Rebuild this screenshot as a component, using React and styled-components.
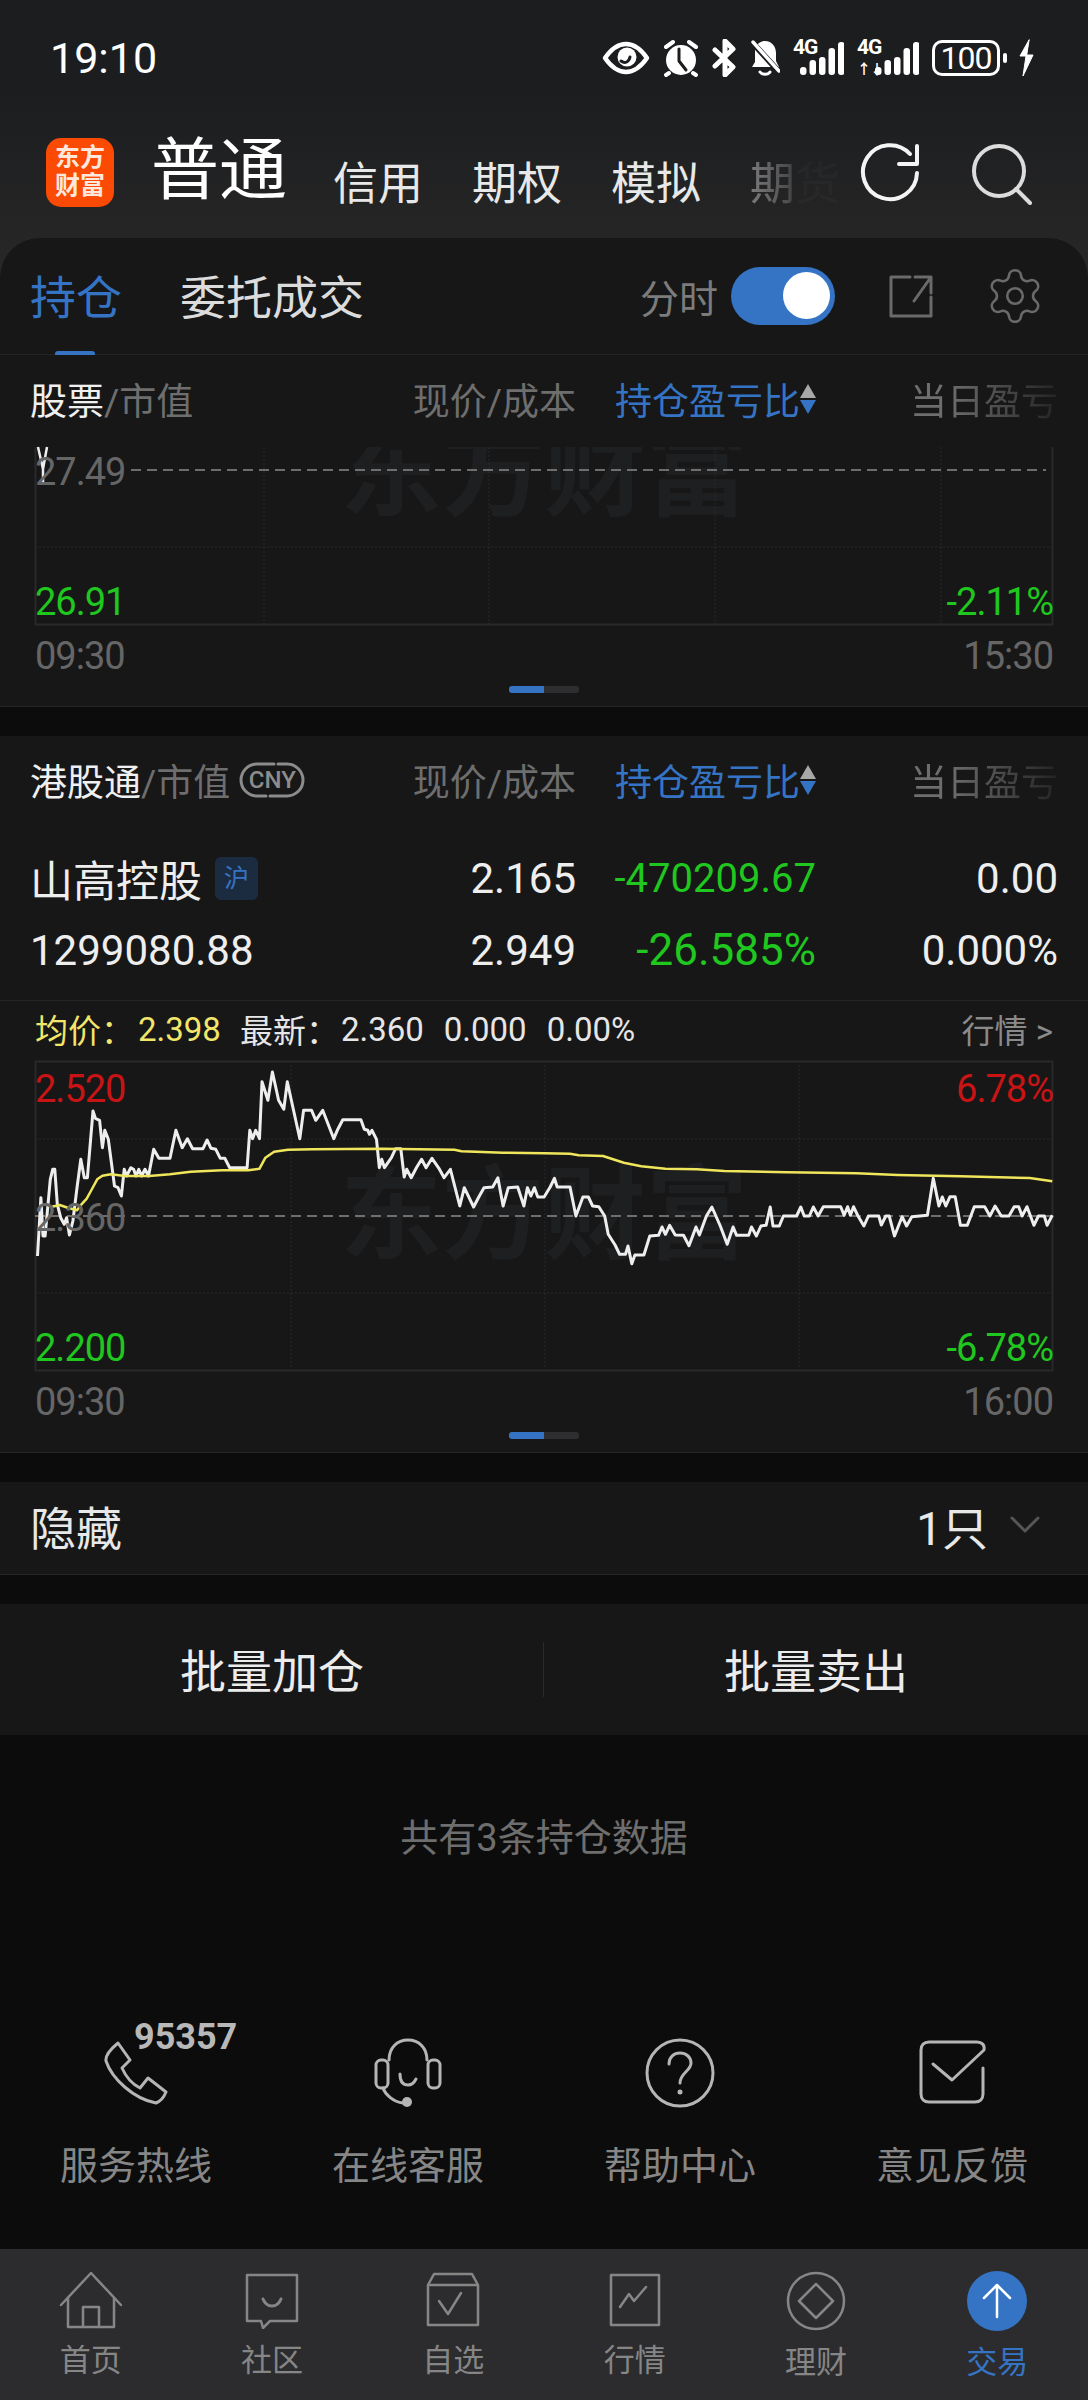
import React from "react";
import styled, { createGlobalStyle } from "styled-components";
import { Settings } from "lucide-react";

const GlobalStyle = createGlobalStyle`
    html, body {
        margin: 0;
        padding: 0;
        background: #0c0c0c;
    }
    * {
        box-sizing: border-box;
    }
`;

const BLUE = "#3574c4";
const GREEN = "#1fc71f";
const RED = "#c81414";
const GREY = "#6e6e6e";
const PANEL = "#171718";

// traced from the reference: x/y are in the crop's scale, converted to chart pixels below
const whiteLeft = [[108,645],[118,470],[124,585],[130,585],[145,415],[152,385],[158,385],[165,490],[175,530],[185,550],[192,530],[200,582],[210,540],[222,440],[233,355],[243,410],[252,410],[268,210],[275,232],[287,238],[295,320],[302,268],[312,295],[330,435],[340,440],[350,465],[358,385],[365,405],[377,380],[385,385],[392,405],[400,385],[408,405],[418,385],[428,405],[443,325],[458,352],[490,352],[507,268],[525,320],[540,293],[555,323],[585,323],[597,297],[608,322],[622,325],[635,352],[648,352],[662,380],[712,380],[720,268],[728,293],[737,268],[748,293],[755,122],[772,178],[785,93],[803,178],[818,205],[828,122],[840,180],[864,293],[875,208],[898,208],[910,238],[930,208],[962,293],[972,268],[988,236],[1040,236],[1050,265],[1060,268],[1065,280],[1072,268],[1085,295],[1093,380],[1100,355],[1108,380],[1128,350],[1140,323],[1155,323],[1165,408],[1172,385],[1185,410],[1200,380],[1215,355],[1228,380],[1245,352],[1265,382],[1280,410],[1298,385],[1325,495],[1338,440],[1365,498],[1380,468],[1395,440],[1420,438],[1435,410],[1450,495],[1465,440],[1492,438],[1510,495],[1520,440],[1530,465],[1540,440],[1550,468],[1568,468]];
const whiteRight = [[18,438],[30,412],[38,438],[75,438],[92,525],[112,468],[128,468],[140,495],[158,497],[175,525],[185,580],[205,612],[218,640],[235,640],[242,615],[253,668],[262,642],[288,642],[305,585],[330,583],[340,558],[350,580],[362,553],[378,582],[402,583],[418,614],[438,558],[448,582],[468,525],[484,498],[508,555],[528,610],[545,558],[555,583],[590,583],[598,558],[612,585],[625,555],[640,553],[652,498],[660,555],[678,555],[690,525],[728,525],[740,498],[750,525],[765,525],[776,498],[790,525],[805,497],[855,497],[865,523],[875,497],[883,523],[892,497],[905,525],[922,555],[935,525],[965,525],[972,552],[985,525],[995,525],[1010,585],[1032,527],[1045,555],[1060,527],[1105,523],[1122,412],[1138,495],[1148,468],[1158,495],[1170,467],[1185,467],[1200,553],[1220,553],[1240,497],[1270,497],[1285,525],[1300,495],[1318,525],[1340,525],[1355,497],[1368,497],[1378,525],[1392,497],[1412,553],[1425,525],[1442,525],[1450,553],[1465,523]];
const yellowLeft = [[150,497],[172,492],[195,500],[222,508],[235,490],[250,473],[262,450],[280,415],[295,404],[320,400],[360,405],[430,405],[490,400],[550,392],[640,388],[715,388],[748,383],[765,350],[790,332],[830,326],[900,325],[1100,323],[1310,326],[1330,331],[1450,335],[1568,337]];
const yellowRight = [[75,338],[100,343],[170,345],[230,365],[280,376],[350,383],[440,385],[520,390],[700,394],[900,397],[1020,402],[1200,406],[1400,411],[1465,421]];

const toPoints = (left, right) =>
    [
        ...left.map(([x, y]) => [x / 2.882 - 35, y / 3 - 20]),
        ...right.map(([x, y]) => [544 + x / 2.882 - 35, y / 3 - 20]),
    ]
        .map(([x, y]) => `${x.toFixed(1)},${y.toFixed(1)}`)
        .join(" ");

const Page = styled.div`
    width: 1088px;
    height: 2400px;
    display: flex;
    flex-direction: column;
    overflow: hidden;
    background: #0c0c0c;
    font-family: Roboto, "Noto Sans CJK SC", sans-serif;
    color: #fff;
    > * {
        flex-shrink: 0;
    }
`;

const TopBlock = styled.div`
    background: linear-gradient(180deg, #1c1d1f 0, #1c1d1f 90px, #282828 280px);
`;

const StatusBar = styled.div`
    height: 115px;
    padding: 0 53px 0 50px;
    display: flex;
    align-items: center;
    justify-content: space-between;
`;

const Clock = styled.div`
    font-size: 43px;
    color: #fff;
`;

const StatusIcons = styled.div`
    display: flex;
    align-items: center;
    gap: 13px;
    svg {
        display: block;
    }
`;

const Battery = styled.div`
    width: 68px;
    height: 36px;
    margin-right: 4px;
    border: 3px solid #fff;
    border-radius: 10px;
    display: flex;
    align-items: center;
    justify-content: center;
    font-size: 32px;
    letter-spacing: -1px;
    position: relative;
    &::after {
        content: "";
        position: absolute;
        right: -10px;
        top: 10px;
        width: 4px;
        height: 10px;
        border-radius: 2px;
        background: #fff;
    }
`;

const SignalWrap = styled.div`
    position: relative;
    height: 36px;
    width: ${(p) => p.$w}px;
`;

const SignalLabel = styled.span`
    position: absolute;
    left: 0;
    top: ${(p) => p.$top ?? -3}px;
    font-size: ${(p) => p.$size ?? 21}px;
    font-weight: 700;
    letter-spacing: -1px;
    line-height: 20px;
    color: #fff;
`;

const NavRow = styled.div`
    height: 123px;
    padding: 0 56px 0 46px;
    display: flex;
    align-items: flex-start;
`;

const Logo = styled.div`
    width: 69px;
    height: 69px;
    margin-top: 23px;
    border-radius: 15px;
    background: #fa4a04;
    color: #ffe7dc;
    font-size: 25px;
    font-weight: 700;
    line-height: 28px;
    text-align: center;
    padding-top: 6px;
`;

const MainNav = styled.div`
    margin: 9px 46px 0 37px;
    font-size: 68px;
    line-height: 94px;
    color: #fff;
    white-space: nowrap;
`;

const NavItem = styled.div`
    margin: 39px 49px 0 0;
    font-size: 45px;
    line-height: 62px;
    color: #e8e8e8;
    white-space: nowrap;
`;

const FadedNavItem = styled(NavItem)`
    margin-right: 20px;
    -webkit-mask-image: linear-gradient(90deg, rgba(0,0,0,0.45) 0, rgba(0,0,0,0.22) 42%, rgba(0,0,0,0.03) 55%);
    mask-image: linear-gradient(90deg, rgba(0,0,0,0.45) 0, rgba(0,0,0,0.22) 42%, rgba(0,0,0,0.03) 55%);
`;

const NavIcons = styled.div`
    margin-top: 28px;
    margin-left: auto;
    display: flex;
    gap: 50px;
    svg {
        display: block;
    }
`;

const TabStrip = styled.div`
    height: 117px;
    background: ${PANEL};
    border-radius: 40px 40px 0 0;
    border-bottom: 1px solid #242426;
    padding: 0 42px 0 30px;
    display: flex;
    align-items: center;
`;

const Tab = styled.div`
    position: relative;
    font-size: 46px;
    line-height: 60px;
    margin: 4px 58px 0 0;
    color: ${(p) => (p.$active ? BLUE : "#dcdcdc")};
    ${(p) =>
        p.$active &&
        `
        &::after {
            content: "";
            position: absolute;
            left: 25px;
            bottom: -29px;
            width: 40px;
            height: 6px;
            border-radius: 3px;
            background: ${BLUE};
        }
    `}
`;

const TabTools = styled.div`
    margin-left: auto;
    display: flex;
    align-items: center;
    color: #6a6a6a;
    svg {
        display: block;
    }
`;

const ToolLabel = styled.span`
    font-size: 39px;
    color: #7c7c7c;
    margin-right: 13px;
`;

const Toggle = styled.div`
    width: 104px;
    height: 58px;
    border-radius: 29px;
    background: ${BLUE};
    padding: 5px;
    margin-right: 53px;
    display: flex;
    justify-content: flex-end;
    &::after {
        content: "";
        width: 47px;
        height: 47px;
        border-radius: 50%;
        background: #fff;
    }
`;

const ToolGap = styled.span`
    width: 50px;
`;

const Section = styled.section`
    position: relative;
    background: ${PANEL};
    border-bottom: 1px solid #262628;
    margin-bottom: ${(p) => p.$gap ?? 29}px;
`;

const ColumnHead = styled.div`
    height: 92px;
    padding: 0 30px 5px;
    display: grid;
    grid-template-columns: 300px 246px 240px 242px;
    align-items: center;
    font-size: 37px;
    color: ${GREY};
`;

const HeadName = styled.div`
    display: flex;
    align-items: center;
    white-space: nowrap;
    b {
        font-weight: 400;
        color: #f0f0f0;
    }
`;

const CnyBadge = styled.span`
    position: relative;
    margin-left: 8px;
    width: 68px;
    height: 38px;
    color: #8c8c8c;
    font-size: 24px;
    font-weight: 500;
    line-height: 38px;
    text-align: center;
    svg {
        position: absolute;
        left: 0;
        top: 0;
    }
`;

const HeadCell = styled.div`
    text-align: right;
    white-space: nowrap;
`;

const SortCell = styled.div`
    display: flex;
    align-items: center;
    justify-content: flex-end;
    color: ${BLUE};
    white-space: nowrap;
`;

const SortArrows = styled.span`
    width: 16px;
    height: 34px;
    display: flex;
    flex-direction: column;
    justify-content: center;
    gap: 2px;
    &::before,
    &::after {
        content: "";
        width: 0;
        height: 0;
        border-left: 8px solid transparent;
        border-right: 8px solid transparent;
    }
    &::before {
        border-bottom: 14px solid #a8a8a8;
    }
    &::after {
        border-top: 14px solid ${BLUE};
    }
`;

const FadeCell = styled.div`
    text-align: right;
    white-space: nowrap;
    -webkit-mask-image: linear-gradient(90deg, #000 55%, rgba(0,0,0,0.15) 100%);
    mask-image: linear-gradient(90deg, #000 55%, rgba(0,0,0,0.15) 100%);
`;

const Rows = styled.div`
    padding: 14px 0;
    border-bottom: 1px solid #242426;
`;

const Row = styled.div`
    height: 72px;
    padding: 0 30px;
    display: grid;
    grid-template-columns: 300px 246px 240px 242px;
    align-items: center;
    font-size: 42px;
    color: #eeeeee;
`;

const NameCell = styled.div`
    display: flex;
    align-items: center;
    white-space: nowrap;
    font-size: ${(p) => p.$size || 42}px;
`;

const MarketTag = styled.span`
    margin-left: 13px;
    width: 43px;
    height: 43px;
    border-radius: 6px;
    background: #1c2c40;
    color: ${BLUE};
    font-size: 25px;
    line-height: 43px;
    text-align: center;
`;

const ValueCell = styled.div`
    text-align: right;
    white-space: nowrap;
    color: ${(p) => p.$color || "#eeeeee"};
    font-size: ${(p) => p.$size || 42}px;
`;

const InfoRow = styled.div`
    height: 60px;
    padding: 0 35px 4px;
    display: flex;
    align-items: center;
    font-size: 33px;
`;

const InfoItem = styled.span`
    margin-right: ${(p) => p.$gap ?? 20}px;
    color: ${(p) => p.$color || "#e6e6e6"};
    white-space: nowrap;
`;

const QuoteLink = styled.span`
    margin-left: auto;
    color: #8a8a8a;
`;

const ChartBox = styled.div`
    position: relative;
    margin: 0 35px;
    height: ${(p) => p.$h}px;
    svg {
        display: block;
        position: relative;
        overflow: visible;
    }
`;

const Watermark = styled.div`
    position: absolute;
    left: 0;
    right: 0;
    top: ${(p) => p.$top}px;
    height: ${(p) => p.$h}px;
    overflow: hidden;
    text-align: center;
    font-size: 102px;
    font-weight: 700;
    line-height: ${(p) => p.$line}px;
    color: #1e1f20;
    white-space: nowrap;
`;

const ChartLabel = styled.span`
    position: absolute;
    ${(p) => (p.$right ? "right: 0;" : "left: 0;")}
    top: ${(p) => p.$y - 25}px;
    line-height: 50px;
    font-size: 38px;
    letter-spacing: -1px;
    color: ${(p) => p.$color};
`;

const TimeAxis = styled.div`
    height: 61px;
    padding: 0 35px;
    display: flex;
    justify-content: space-between;
    align-items: center;
    font-size: 38px;
    letter-spacing: -1px;
    color: #666666;
`;

const Pager = styled.div`
    width: 70px;
    height: 7px;
    margin: 0 auto 13px;
    border-radius: 3px;
    background: linear-gradient(90deg, ${BLUE} 50%, #2e2e30 50%);
`;

const HiddenRow = styled.div`
    height: 92px;
    padding: 0 48px 6px 30px;
    display: flex;
    align-items: center;
    justify-content: space-between;
    font-size: 46px;
    color: #e8e8e8;
`;

const HiddenCount = styled.div`
    display: flex;
    align-items: center;
    gap: 22px;
    svg {
        display: block;
    }
`;

const BatchBar = styled.div`
    height: 131px;
    background: ${PANEL};
    display: grid;
    grid-template-columns: 1fr 1fr;
`;

const BatchButton = styled.div`
    display: flex;
    align-items: center;
    justify-content: center;
    padding-bottom: 4px;
    font-size: 46px;
    color: #ececec;
    position: relative;
    ${(p) =>
        p.$divided &&
        `
        &::after {
            content: "";
            position: absolute;
            right: 0;
            top: 38px;
            bottom: 38px;
            width: 1px;
            background: #2a2a2c;
        }
    `}
`;

const RecordCount = styled.div`
    margin-top: 78px;
    height: 50px;
    line-height: 50px;
    text-align: center;
    font-size: 38px;
    color: #6e6e6e;
`;

const SupportGrid = styled.div`
    margin-top: 174px;
    display: grid;
    grid-template-columns: repeat(4, 272px);
`;

const SupportItem = styled.div`
    display: flex;
    flex-direction: column;
    align-items: center;
    color: #b5b5b5;
    svg {
        display: block;
    }
`;

const SupportIcon = styled.div`
    height: 72px;
    display: flex;
    align-items: center;
    justify-content: center;
    position: relative;
`;

const Hotline = styled.span`
    position: absolute;
    left: 30px;
    top: -20px;
    font-size: 36px;
    font-weight: 700;
    line-height: 40px;
    color: #b8b8b8;
`;

const SupportLabel = styled.div`
    margin-top: 32px;
    font-size: 38px;
    line-height: 50px;
    color: #868686;
    white-space: nowrap;
`;

const TabBar = styled.nav`
    margin-top: auto;
    height: 151px;
    background: #2c2c2e;
    padding: 22px 0 0;
    display: grid;
    grid-template-columns: repeat(6, 181.33px);
`;

const TabBarItem = styled.div`
    display: flex;
    flex-direction: column;
    align-items: center;
    font-size: 31px;
    line-height: 40px;
    color: ${(p) => (p.$active ? BLUE : "#868686")};
    svg {
        display: block;
        margin-bottom: 12px;
    }
`;

const Icon = ({ w, h, children, stroke = "currentColor", sw = 3 }) => (
    <svg width={w} height={h} viewBox={`0 0 ${w} ${h}`} fill="none" stroke={stroke} strokeWidth={sw} strokeLinecap="round" strokeLinejoin="round">
        {children}
    </svg>
);

const Bars = ({ x }) =>
    [8, 15, 18, 27, 33].map((h, i) => (
        <rect key={i} x={x + i * 9.5} y={35 - h} width="6.5" height={h} rx="3" fill="#fff" stroke="none" />
    ));

const StatusIconSet = () => (
    <StatusIcons>
        <Icon w={48} h={34} stroke="#fff" sw={4.5}>
            <path d="M3 17C10 7 17 3 24 3s14 4 21 14c-7 10-14 14-21 14S10 27 3 17z" />
            <circle cx="25" cy="16" r="9.5" fill="#fff" stroke="none" />
            <path d="M19 20c4 3 8 1 9-4" stroke="#1c1d1f" strokeWidth="3" />
        </Icon>
        <Icon w={36} h={38} stroke="#fff" sw={4}>
            <circle cx="18" cy="21" r="15" fill="#fff" stroke="none" />
            <path d="M16 10v12l7 9" stroke="#1c1d1f" strokeWidth="3" />
            <path d="M3 8l7-5M33 8l-7-5M6 34l-3 2M30 34l3 2" />
        </Icon>
        <Icon w={25} h={38} stroke="#fff" sw={5}>
            <path d="M3 11l18 17-8 8V2l8 8L3 27" />
        </Icon>
        <Icon w={30} h={36} stroke="#fff" sw={3}>
            <path d="M15 1C22 1 26 7 26 13V21L29 27H2L5 22V12C5 6 9 1 15 1z" fill="#fff" stroke="none" />
            <path d="M1 1l29 32" stroke="#1c1d1f" strokeWidth="6" />
            <path d="M3 2l26 29" strokeWidth="3.5" />
            <path d="M10 32c2 3 8 3 10 0" />
        </Icon>
        <SignalWrap $w={51}>
            <SignalLabel>4G</SignalLabel>
            <Icon w={51} h={36}>
                <Bars x={7} />
            </Icon>
        </SignalWrap>
        <SignalWrap $w={62}>
            <SignalLabel>4G</SignalLabel>
            <SignalLabel $top={19} $size={14}>↑↓</SignalLabel>
            <Icon w={62} h={36}>
                <Bars x={18} />
            </Icon>
        </SignalWrap>
        <Battery>100</Battery>
        <Icon w={18} h={38} stroke="#fff" sw={1}>
            <path d="M12 1L3 17h6L6 37l10-21h-6z" fill="#fff" />
        </Icon>
    </StatusIcons>
);

const GridLines = ({ w, h, xs, ys, top }) => (
    <>
        <path d={`M0.5 0V${h}M${w - 0.5} 0V${h}M0 ${h - 0.5}H${w}`} stroke="#29292b" strokeWidth="2" fill="none" />
        {top && <path d={`M0 0.5H${w}`} stroke="#29292b" strokeWidth="2" />}
        {xs.map((x) => (
            <path key={x} d={`M${x} 0V${h}`} stroke="#2a2a2c" strokeWidth="1" strokeDasharray="2 2" />
        ))}
        {ys.map((y) => (
            <path key={y} d={`M0 ${y}H${w}`} stroke="#2a2a2c" strokeWidth="1" strokeDasharray="2 2" />
        ))}
    </>
);

const SessionChartEmpty = () => (
    <ChartBox $h={178}>
        <Watermark $top={0} $h={72} $line={52}>东方财富</Watermark>
        <svg width="1018" height="178">
            <GridLines w={1018} h={178} xs={[229, 454, 680, 906]} ys={[100]} />
            <path d="M96 23H1011" stroke="#8a8a8a" strokeWidth="1.5" strokeDasharray="10 6" />
            <path d="M3 0l5 22 4-22M8 22v14" stroke="#eee" strokeWidth="2.5" fill="none" />
        </svg>
        <ChartLabel $y={25} $color="#666666">27.49</ChartLabel>
        <ChartLabel $y={155} $color={GREEN}>26.91</ChartLabel>
        <ChartLabel $y={155} $right $color={GREEN}>-2.11%</ChartLabel>
    </ChartBox>
);

const SessionChart = () => (
    <ChartBox $h={310}>
        <Watermark $top={95} $h={120} $line={120}>东方财富</Watermark>
        <svg width="1018" height="310">
            <GridLines w={1018} h={310} xs={[256, 510, 764]} ys={[78, 232]} top />
            <path d="M0 155H1018" stroke="#8a8a8a" strokeWidth="1.5" strokeDasharray="10 6" />
            <polyline points={toPoints(whiteLeft, whiteRight)} fill="none" stroke="#eeeeee" strokeWidth="3" strokeLinejoin="round" />
            <polyline points={toPoints(yellowLeft, yellowRight)} fill="none" stroke="#efe65c" strokeWidth="2.5" strokeLinejoin="round" />
        </svg>
        <ChartLabel $y={28} $color={RED}>2.520</ChartLabel>
        <ChartLabel $y={28} $right $color={RED}>6.78%</ChartLabel>
        <ChartLabel $y={157} $color="#666666">2.360</ChartLabel>
        <ChartLabel $y={287} $color={GREEN}>2.200</ChartLabel>
        <ChartLabel $y={287} $right $color={GREEN}>-6.78%</ChartLabel>
    </ChartBox>
);

const supportItems = [
    {
        label: "服务热线",
        icon: (
            <Icon w={64} h={64}>
                <path d="M14 2L26 19L18 27C22 36 28 43 36 47L44 37L62 51C60 56 57 60 52 62C30 58 8 38 2 20C1 14 8 7 14 2z" />
            </Icon>
        ),
    },
    {
        label: "在线客服",
        icon: (
            <Icon w={70} h={70}>
                <path d="M16 22C16 10 24 2 35 2s19 8 19 20" />
                <rect x="3" y="22" width="12" height="28" rx="5" />
                <rect x="55" y="22" width="12" height="28" rx="5" />
                <path d="M27 36c0 8 3 11 8 11 4 0 6-2 8-6" />
                <path d="M10 50c2 6 10 14 20 15" />
                <circle cx="34" cy="64" r="5" fill="currentColor" stroke="none" />
            </Icon>
        ),
    },
    {
        label: "帮助中心",
        icon: (
            <Icon w={70} h={70}>
                <circle cx="35" cy="35" r="33" />
                <path d="M24 26c0-7 5-11 11-11s11 4 11 10c0 8-11 10-11 20" />
                <circle cx="35" cy="54" r="2.5" fill="currentColor" stroke="none" />
            </Icon>
        ),
    },
    {
        label: "意见反馈",
        icon: (
            <Icon w={70} h={66}>
                <path d="M66 28V54c0 5-3 8-8 8H12c-5 0-8-3-8-8V10c0-5 3-8 8-8h48c5 0 8 3 7 8L35 40 16 24" />
            </Icon>
        ),
    },
];

const tabItems = [
    {
        label: "首页",
        icon: (
            <Icon w={64} h={58} sw={2.5}>
                <path d="M2 34L32 2l30 32" />
                <path d="M9 27v29h46V27" />
                <path d="M24 56V36h16v20" />
            </Icon>
        ),
    },
    {
        label: "社区",
        icon: (
            <Icon w={56} h={58} sw={2.5}>
                <path d="M3 4h50v46H26l-7 7-2-7H3z" />
                <path d="M19 28c2 5 5 7 9 7s7-2 9-7" strokeWidth="3" />
            </Icon>
        ),
    },
    {
        label: "自选",
        icon: (
            <Icon w={56} h={58} sw={2.5}>
                <path d="M3 14h50v40H3zM3 14L9 3h38l6 11" />
                <path d="M14 30l9 13 13-21" />
            </Icon>
        ),
    },
    {
        label: "行情",
        icon: (
            <Icon w={54} h={58} sw={2.5}>
                <path d="M3 4h48v50H3z" />
                <path d="M12 36l9-13 5 7 12-14" />
            </Icon>
        ),
    },
    {
        label: "理财",
        icon: (
            <Icon w={62} h={60} sw={2.5}>
                <circle cx="31" cy="30" r="28" />
                <path d="M31 13l17 17-17 17-17-17z" />
            </Icon>
        ),
    },
];

const App = () => (
    <Page>
        <GlobalStyle />
        <TopBlock>
            <StatusBar>
                <Clock>19:10</Clock>
                <StatusIconSet />
            </StatusBar>
            <NavRow>
                <Logo>
                    东方
                    <br />
                    财富
                </Logo>
                <MainNav>普通</MainNav>
                <NavItem>信用</NavItem>
                <NavItem>期权</NavItem>
                <NavItem>模拟</NavItem>
                <FadedNavItem>期货</FadedNavItem>
                <NavIcons>
                    <Icon w={60} h={60} stroke="#f4f4f4" sw={4}>
                        <path d="M50 11A27 27 0 1 0 57 30" />
                        <path d="M57 3v18H39" />
                    </Icon>
                    <Icon w={62} h={62} stroke="#dcdcdc" sw={4}>
                        <circle cx="29" cy="28" r="25" />
                        <path d="M46 46l14 14" />
                    </Icon>
                </NavIcons>
            </NavRow>
            <TabStrip>
                <Tab $active>持仓</Tab>
                <Tab>委托成交</Tab>
                <TabTools>
                    <ToolLabel>分时</ToolLabel>
                    <Toggle />
                    <Icon w={46} h={46}>
                        <path d="M22 4H3v39h40V24" />
                        <path d="M27 4h16v16M43 4L26 28" />
                    </Icon>
                    <ToolGap />
                    <Settings size={62} strokeWidth={1} />
                </TabTools>
            </TabStrip>
        </TopBlock>

        <Section>
            <ColumnHead>
                <HeadName>
                    <b>股票</b>/市值
                </HeadName>
                <HeadCell>现价/成本</HeadCell>
                <SortCell>
                    持仓盈亏比
                    <SortArrows />
                </SortCell>
                <FadeCell>当日盈亏</FadeCell>
            </ColumnHead>
            <SessionChartEmpty />
            <TimeAxis>
                <span>09:30</span>
                <span>15:30</span>
            </TimeAxis>
            <Pager />
        </Section>

        <Section>
            <ColumnHead>
                <HeadName>
                    <b>港股通</b>/市值
                    <CnyBadge>
                        <Icon w={68} h={38} sw={3}>
                            <path d="M36 3H19A16 16 0 0 0 19 35H28" />
                            <path d="M32 35H49A16 16 0 0 0 49 3H40" />
                        </Icon>
                        CNY
                    </CnyBadge>
                </HeadName>
                <HeadCell>现价/成本</HeadCell>
                <SortCell>
                    持仓盈亏比
                    <SortArrows />
                </SortCell>
                <FadeCell>当日盈亏</FadeCell>
            </ColumnHead>
            <Rows>
                <Row>
                    <NameCell $size={43}>
                        山高控股
                        <MarketTag>沪</MarketTag>
                    </NameCell>
                    <ValueCell>2.165</ValueCell>
                    <ValueCell $color={GREEN} $size={40}>-470209.67</ValueCell>
                    <ValueCell>0.00</ValueCell>
                </Row>
                <Row>
                    <NameCell>1299080.88</NameCell>
                    <ValueCell>2.949</ValueCell>
                    <ValueCell $color={GREEN} $size={44}>-26.585%</ValueCell>
                    <ValueCell>0.000%</ValueCell>
                </Row>
            </Rows>
            <InfoRow>
                <InfoItem $color="#f2e66a" $gap={4}>均价：</InfoItem>
                <InfoItem $color="#f2e66a" $gap={19}>2.398</InfoItem>
                <InfoItem $gap={2}>最新：</InfoItem>
                <InfoItem>2.360</InfoItem>
                <InfoItem>0.000</InfoItem>
                <InfoItem>0.00%</InfoItem>
                <QuoteLink>行情 &gt;</QuoteLink>
            </InfoRow>
            <SessionChart />
            <TimeAxis>
                <span>09:30</span>
                <span>16:00</span>
            </TimeAxis>
            <Pager />
        </Section>

        <Section>
            <HiddenRow>
                隐藏
                <HiddenCount>
                    1只
                    <Icon w={30} h={18} stroke="#555">
                        <path d="M2 2l13 13L28 2" />
                    </Icon>
                </HiddenCount>
            </HiddenRow>
        </Section>

        <BatchBar>
            <BatchButton $divided>批量加仓</BatchButton>
            <BatchButton>批量卖出</BatchButton>
        </BatchBar>

        <RecordCount>共有3条持仓数据</RecordCount>

        <SupportGrid>
            {supportItems.map((item) => (
                <SupportItem key={item.label}>
                    <SupportIcon>
                        {item.icon}
                        {item.label === "服务热线" && <Hotline>95357</Hotline>}
                    </SupportIcon>
                    <SupportLabel>{item.label}</SupportLabel>
                </SupportItem>
            ))}
        </SupportGrid>

        <TabBar>
            {tabItems.map((item) => (
                <TabBarItem key={item.label}>
                    {item.icon}
                    {item.label}
                </TabBarItem>
            ))}
            <TabBarItem $active>
                <Icon w={60} h={60} stroke="#fff" sw={2.5}>
                    <circle cx="30" cy="30" r="30" fill={BLUE} stroke="none" />
                    <path d="M30 46V14M17 27l13-13 13 13" />
                </Icon>
                交易
            </TabBarItem>
        </TabBar>
    </Page>
);

export default App;
